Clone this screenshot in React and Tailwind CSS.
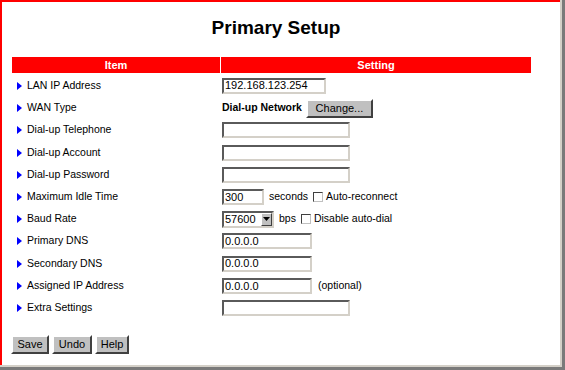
import React from 'react';

const rows = [
  { label: 'LAN IP Address', h: 'h-[23px]', kind: 'lan' },
  { label: 'WAN Type', h: 'h-[22px]', kind: 'wan' },
  { label: 'Dial-up Telephone', h: 'h-[22px]', kind: 'wide' },
  { label: 'Dial-up Account', h: 'h-[23px]', kind: 'wide' },
  { label: 'Dial-up Password', h: 'h-[22px]', kind: 'wide' },
  { label: 'Maximum Idle Time', h: 'h-[22px]', kind: 'idle' },
  { label: 'Baud Rate', h: 'h-[22px]', kind: 'baud' },
  { label: 'Primary DNS', h: 'h-[22px]', kind: 'dns' },
  { label: 'Secondary DNS', h: 'h-[23px]', kind: 'dns' },
  { label: 'Assigned IP Address', h: 'h-[22px]', kind: 'assigned' },
  { label: 'Extra Settings', h: 'h-[22px]', kind: 'wide' },
];

const inset =
  'h-[16px] border-2 border-t-[#5a5a5a] border-l-[#5a5a5a] border-r-[#d4d0c8] border-b-[#d4d0c8] bg-white flex items-center px-[1px] text-[11px] leading-none text-black';

const raised =
  'bg-[#c0c0c0] border-2 border-t-white border-l-white border-r-[#404040] border-b-[#404040] text-[11px] leading-none text-black flex items-center justify-center';

function Box({ w, value }) {
  return <div className={`${inset} ${w}`}>{value}</div>;
}

function Check({ label }) {
  return (
    <span className="flex items-center gap-[3px]">
      <span className="w-[10px] h-[10px] border border-t-[#404040] border-l-[#404040] border-r-[#c0c0c0] border-b-[#c0c0c0] bg-white" />
      <span>{label}</span>
    </span>
  );
}

function Setting({ kind }) {
  if (kind === 'lan') return <Box w="w-[104px]" value="192.168.123.254" />;
  if (kind === 'wide') return <Box w="w-[128px]" value="" />;
  if (kind === 'dns') return <Box w="w-[90px]" value="0.0.0.0" />;
  if (kind === 'wan')
    return (
      <div className="flex items-center gap-[4px]">
        <span className="font-bold">Dial-up Network</span>
        <button className={`${raised} w-[67px] h-[19px]`}>Change...</button>
      </div>
    );
  if (kind === 'idle')
    return (
      <div className="flex items-center gap-[5px]">
        <Box w="w-[42px]" value="300" />
        <span>seconds</span>
        <Check label="Auto-reconnect" />
      </div>
    );
  if (kind === 'baud')
    return (
      <div className="flex items-center gap-[5px]">
        <div className={`${inset} w-[52px] h-[17px] justify-between pr-0`}>
          <span>57600</span>
          <span className="w-[11px] h-[13px] bg-[#c0c0c0] border border-t-white border-l-white border-r-[#404040] border-b-[#404040] flex items-center justify-center">
            <svg width="7" height="4" viewBox="0 0 7 4">
              <path d="M0 0h7L3.5 4z" fill="#000" />
            </svg>
          </span>
        </div>
        <span>bps</span>
        <Check label="Disable auto-dial" />
      </div>
    );
  if (kind === 'assigned')
    return (
      <div className="flex items-center gap-[6px]">
        <Box w="w-[90px]" value="0.0.0.0" />
        <span>(optional)</span>
      </div>
    );
  return null;
}

export default function App() {
  return (
    <div
      className="w-[565px] h-[370px] bg-white border-r-[3px] border-b-[3px] border-[#7a7a7a] overflow-hidden"
      style={{ fontFamily: '"Liberation Sans", Arial, sans-serif' }}
    >
      <div className="w-[562px] h-[367px] border-r-2 border-b-2 border-[#d4d0c8] bg-white">
        <div className="w-[560px] h-[365px] border-t-2 border-l-2 border-[#ff0000] pl-[10px] pt-[16px] text-[10.5px] text-black">
          <h1 className="text-[19px] font-bold text-center leading-none h-[39px] pr-[20px]">Primary Setup</h1>
          <div className="w-[519px]">
            <div className="flex h-[16px] text-white font-bold text-[11px] leading-none">
              <div className="w-[208px] bg-[#ff0000] flex items-center justify-center">Item</div>
              <div className="w-[1px]" />
              <div className="flex-1 bg-[#ff0000] flex items-center justify-center">Setting</div>
            </div>
            <div className="pt-[1px]">
              {rows.map((r) => (
                <div key={r.label} className={`flex items-center ${r.h}`}>
                  <div className="w-[210px] flex items-center gap-[5px] pl-[5px]">
                    <svg width="5" height="8" viewBox="0 0 5 8">
                      <path d="M0 0L5 4L0 8z" fill="#0000ff" />
                    </svg>
                    <span>{r.label}</span>
                  </div>
                  <Setting kind={r.kind} />
                </div>
              ))}
            </div>
          </div>
          <div className="flex gap-[3px] mt-[16px] -ml-[1px]">
            <button className={`${raised} w-[38px] h-[19px]`}>Save</button>
            <button className={`${raised} w-[40px] h-[19px]`}>Undo</button>
            <button className={`${raised} w-[34px] h-[19px]`}>Help</button>
          </div>
        </div>
      </div>
    </div>
  );
}
